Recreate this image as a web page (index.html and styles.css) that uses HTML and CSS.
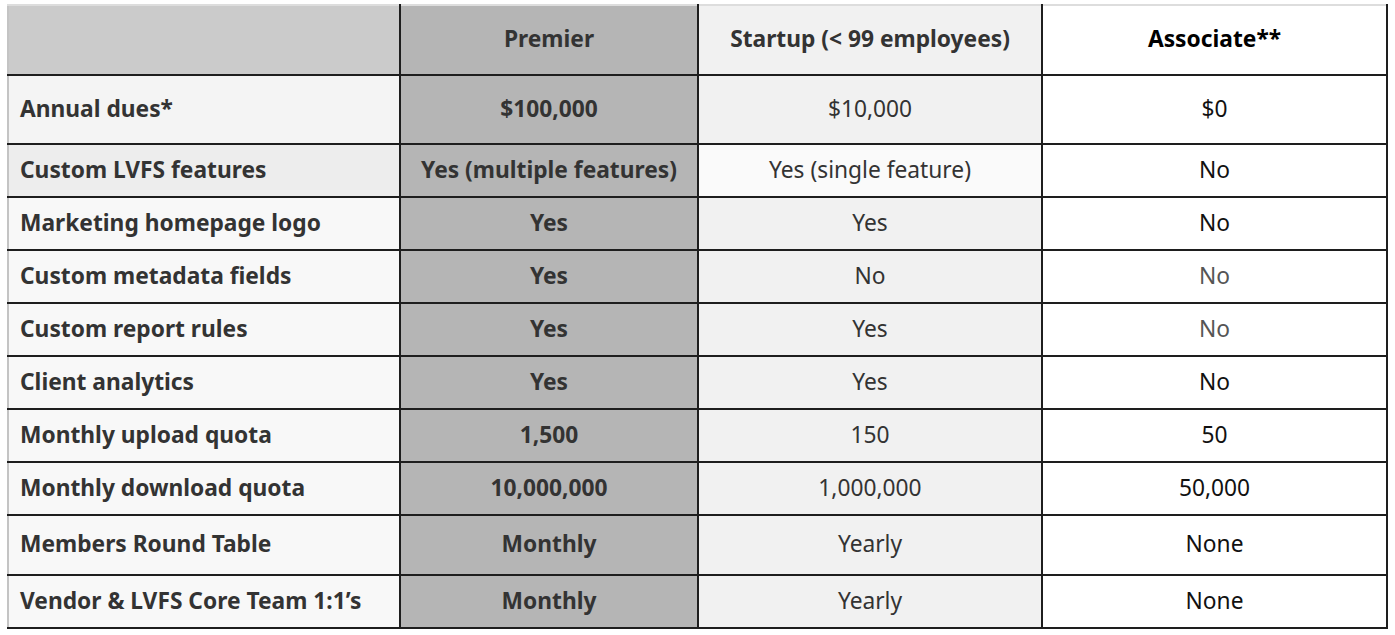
FILE: index.html
```html
<!DOCTYPE html>
<html>
<head>
<meta charset="utf-8">
<link rel="stylesheet" href="styles.css">
</head>
<body>
<table class="plans">
  <colgroup>
    <col class="c-label">
    <col class="c-premier">
    <col class="c-startup">
    <col class="c-assoc">
  </colgroup>
  <thead>
    <tr class="r-head">
      <th class="label"></th>
      <th class="premier">Premier</th>
      <th class="startup">Startup (&lt; 99 employees)</th>
      <th class="assoc">Associate**</th>
    </tr>
  </thead>
  <tbody>
    <tr class="r-dues">
      <td class="label">Annual dues*</td>
      <td class="premier">$100,000</td>
      <td class="startup">$10,000</td>
      <td class="assoc">$0</td>
    </tr>
    <tr class="r-feat">
      <td class="label">Custom LVFS features</td>
      <td class="premier">Yes (multiple features)</td>
      <td class="startup">Yes (single feature)</td>
      <td class="assoc">No</td>
    </tr>
    <tr>
      <td class="label">Marketing homepage logo</td>
      <td class="premier">Yes</td>
      <td class="startup">Yes</td>
      <td class="assoc">No</td>
    </tr>
    <tr>
      <td class="label">Custom metadata fields</td>
      <td class="premier">Yes</td>
      <td class="startup">No</td>
      <td class="assoc muted">No</td>
    </tr>
    <tr>
      <td class="label">Custom report rules</td>
      <td class="premier">Yes</td>
      <td class="startup">Yes</td>
      <td class="assoc muted">No</td>
    </tr>
    <tr>
      <td class="label">Client analytics</td>
      <td class="premier">Yes</td>
      <td class="startup">Yes</td>
      <td class="assoc">No</td>
    </tr>
    <tr>
      <td class="label">Monthly upload quota</td>
      <td class="premier">1,500</td>
      <td class="startup">150</td>
      <td class="assoc">50</td>
    </tr>
    <tr>
      <td class="label">Monthly download quota</td>
      <td class="premier">10,000,000</td>
      <td class="startup">1,000,000</td>
      <td class="assoc">50,000</td>
    </tr>
    <tr class="r-round">
      <td class="label">Members Round Table</td>
      <td class="premier">Monthly</td>
      <td class="startup">Yearly</td>
      <td class="assoc">None</td>
    </tr>
    <tr>
      <td class="label">Vendor &amp; LVFS Core Team 1:1’s</td>
      <td class="premier">Monthly</td>
      <td class="startup">Yearly</td>
      <td class="assoc">None</td>
    </tr>
  </tbody>
</table>
</body>
</html>
```

FILE: styles.css
```css
html, body {
  margin: 0;
  background: #ffffff;
}

body {
  padding: 4px 0 0 7px;
  font-family: "Noto Sans", "Open Sans", sans-serif;
  font-size: 22.75px;
  color: #333333;
}

.plans {
  border-collapse: collapse;
  table-layout: fixed;
  width: 1379px;
}

.c-label { width: 392px; }
.c-premier { width: 298px; }
.c-startup { width: 344px; }
.c-assoc { width: 345px; }

.plans th,
.plans td {
  border: 2px solid #1e1e1e;
  padding: 0 11px 2px;
  line-height: 30px;
  text-align: center;
  height: 53px;
  box-sizing: border-box;
}

.plans thead th {
  border-top: 2px solid #dddddd;
  font-weight: 700;
  height: 70px;
}

.plans .label {
  border-left: 2px solid #c4c4c4;
  text-align: left;
  font-weight: 700;
  background: #f8f8f8;
  color: #333333;
}

.plans thead .label { background: #cbcbcb; }

.plans .premier {
  background: #b5b5b5;
  font-weight: 700;
  color: #333333;
}

.plans .startup {
  background: #f1f1f1;
  color: #333333;
}

.plans .assoc {
  background: #ffffff;
  color: #111111;
}

.plans thead .assoc { color: #000000; }

.plans .muted { color: #555555; }

.plans .r-dues td { height: 69px; }
.plans .r-dues .label { background: #f4f4f4; }

.plans .r-feat .label { background: #ededed; }
.plans .r-feat .startup { background: #fafafa; }

.plans .r-round td { height: 60px; }
```
